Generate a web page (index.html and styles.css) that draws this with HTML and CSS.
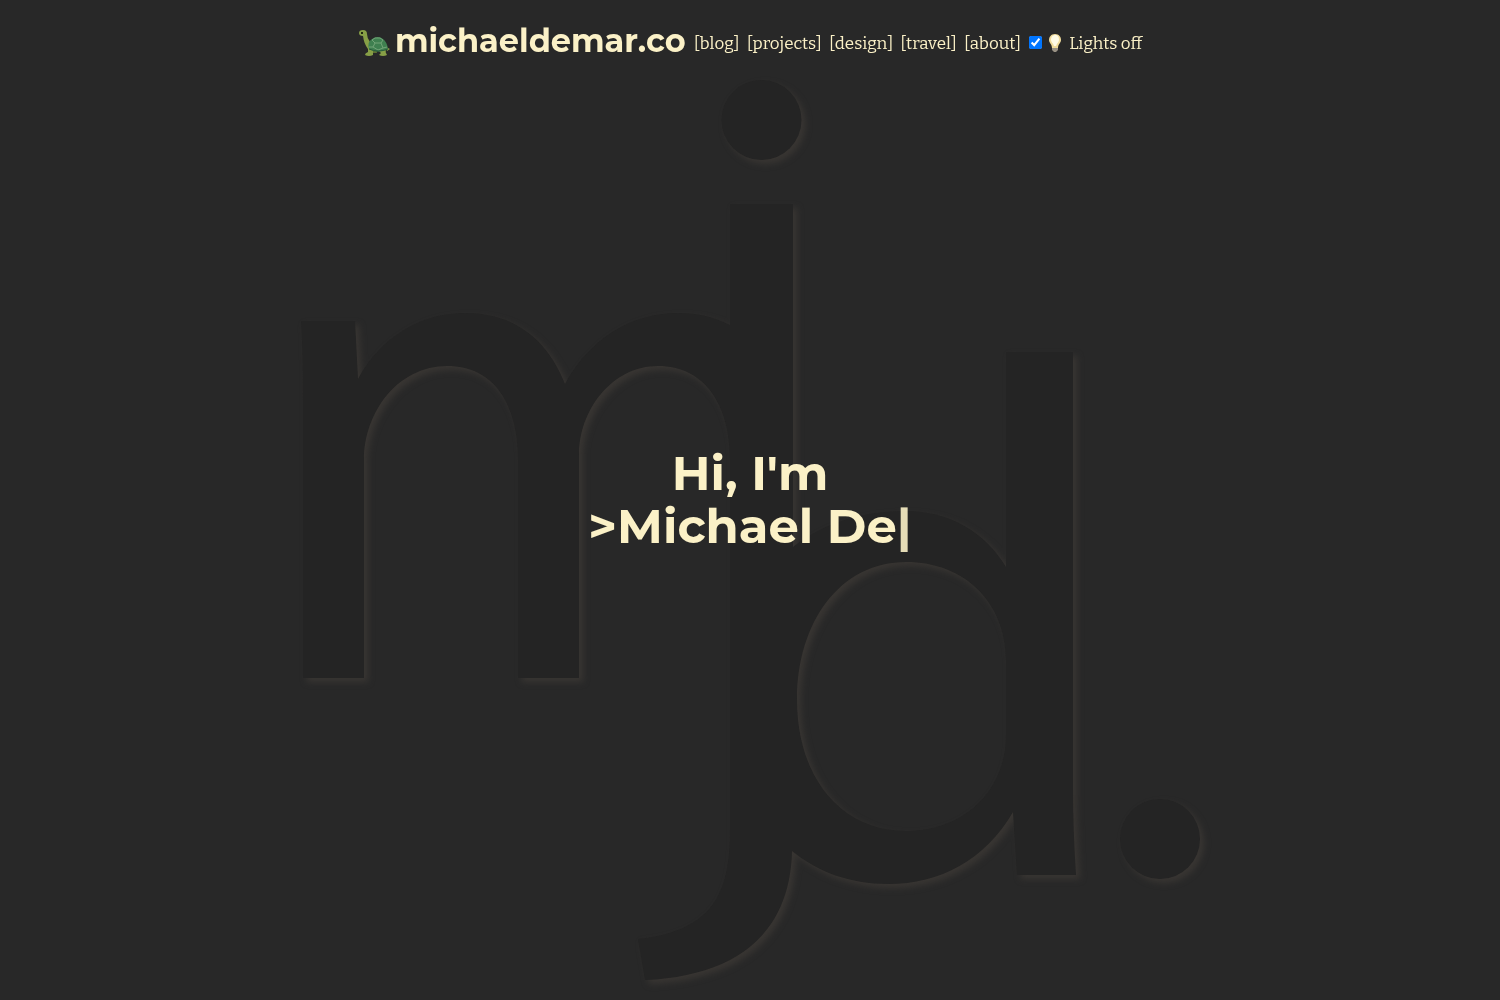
FILE: index.html
```html
<!DOCTYPE html>
<html lang="en">
<head>
<meta charset="utf-8">
<meta name="viewport" content="width=device-width, initial-scale=1">
<title>michaeldemar.co</title>
<link rel="stylesheet" href="styles.css">
</head>
<body>
<svg class="backdrop" viewBox="0 0 1500 1000" aria-hidden="true">
  <defs>
    <filter id="edge" filterUnits="userSpaceOnUse" color-interpolation-filters="sRGB" x="280" y="60" width="950" height="940">
      <feDropShadow dx="4" dy="4" stdDeviation="3" flood-color="#383532"/>
    </filter>
  </defs>
  <g class="mark" filter="url(#edge)">
    <circle cx="761.5" cy="120" r="40"/>
    <circle cx="1160" cy="839" r="40"/>
    <path fill-rule="evenodd" d="M301 321H355L358 379C380 338 420 313 465 313C515 313 548 340 565 384C590 338 632 313 678 313C698 313 714 317 730 325V204H793V547C825 522 865 511 905 511C950 511 985 532 1006 567V352H1073V790Q1073 830 1076 875H1017L1013 812C985 860 940 884 888 884C850 884 818 872 792 851C790 935 735 976 645 980L638 939C712 931 730 895 730 830V460C730 405 705 366 658 366C612 366 579 410 579 455V678H518V460C518 405 495 366 447 366C398 366 364 412 364 460V678H303V400Q303 350 301 321ZM906 562C840 562 797 622 797 700C797 776 840 831 906 831C965 831 1006 790 1006 735V660C1006 603 965 562 906 562Z"/>
  </g>
</svg>

<header class="site-header">
  <h1 class="brand">
    <svg class="turtle" viewBox="0 0 32 28" aria-hidden="true">
      <path class="leg-back" d="M13 19h5l1 5h-5zM22 19l6 1v3h-4z"/>
      <path class="skin" d="M1 4Q1 1 5 1Q9 1 9 5Q9 9 12 13L15 19L15 26Q11 28 7 26Q7 24 10 23V20Q6 15 5 7Q1 7 1 4ZM20 21L27 19Q27 22 28 24L29 26Q25 28 21 26L23 24ZM28 18L32 20L29 22Z"/>
      <path class="shell" d="M11 20Q9 13 14 10Q20 6 25 10Q29 13 30 20Q20 25 11 20Z"/>
      <path class="plates" d="M14 11L17 9L22 9L25 11L23 14L17 14ZM17 14L15 18L11 18M23 14L25 19L29 18M15 18L20 21L25 19"/>
      <path class="rim" d="M11 20Q20 24 30 20"/>
      <circle cx="4" cy="4" r="1"/>
    </svg>
    <span>michaeldemar.co</span>
  </h1>
  <nav class="links" aria-label="Main">
    <a href="#blog">[blog]</a>
    <a href="#projects">[projects]</a>
    <a href="#design">[design]</a>
    <a href="#travel">[travel]</a>
    <a href="#about">[about]</a>
  </nav>
  <label class="lights" for="lights">
    <input class="toggle" type="checkbox" id="lights" checked>
    <svg class="bulb" viewBox="0 0 14 20" aria-hidden="true">
      <path class="glass" d="M7 1C3 1 1 4 1 7C1 10 4 11 4 15H10C10 11 13 10 13 7C13 4 11 1 7 1Z"/>
      <path class="glow" d="M7 2C4 2 3 5 3 7C3 9 5 10 6 13H8C9 10 11 9 11 7C11 4 10 2 7 2Z"/>
      <path class="cap" d="M4 15H10V17L8 19H6L4 17Z"/>
    </svg>
    <span>Lights off</span>
  </label>
</header>

<main class="hero">
  <h2 class="greeting">Hi, I'm<br>&gt;Michael De<span class="cursor">|</span></h2>
</main>
</body>
</html>
```

FILE: styles.css
```css
body {
  margin: 0;
  min-height: 100vh;
  display: flex;
  flex-direction: column;
  background: #282828;
  color: #fbf1c7;
  font-family: Bitter, "DejaVu Serif", serif;
  font-size: 17px;
}

.backdrop {
  position: fixed;
  inset: 0;
  z-index: -1;
  width: 100%;
  height: 100%;
}

.mark { fill: #242424; }

.site-header {
  display: flex;
  flex-wrap: wrap;
  align-items: center;
  justify-content: center;
  gap: 8px;
  padding-top: 20px;
  line-height: 40px;
}

.brand {
  display: flex;
  align-items: center;
  gap: 5px;
  margin: 0;
  font-family: Montserrat, Inter, sans-serif;
  font-size: 32px;
  font-weight: 700;
}

.turtle {
  width: 32px;
  height: 28px;
  margin-top: 4px;
}

.skin { fill: #879f46; }
.leg-back { fill: #5b7032; }
.shell { fill: #3f8050; }
.plates { fill: none; stroke: #72a477; }
.rim { fill: none; stroke: #285d3b; }

.links,
.lights {
  display: flex;
  align-items: center;
  line-height: 34px;
  padding-top: 7px;
}

.links {
  flex-wrap: wrap;
  gap: 7px;
}

.links a {
  color: inherit;
  text-decoration: none;
}

.toggle {
  width: 13px;
  height: 13px;
  margin: 0 6px 3px 0;
}

.bulb {
  width: 14px;
  height: 20px;
  margin: 0 7px 3px 0;
}

.glass { fill: #f1dc9c; }
.glow { fill: #fffbe6; }
.cap { fill: #999184; }

.hero {
  flex: 1;
  display: grid;
  place-items: center;
  padding-bottom: 61px;
}

.greeting {
  margin: 0;
  font-family: Montserrat, Inter, sans-serif;
  font-size: 48px;
  font-weight: 700;
  line-height: 53px;
  text-align: center;
}

.cursor { opacity: 0.9; }
```
